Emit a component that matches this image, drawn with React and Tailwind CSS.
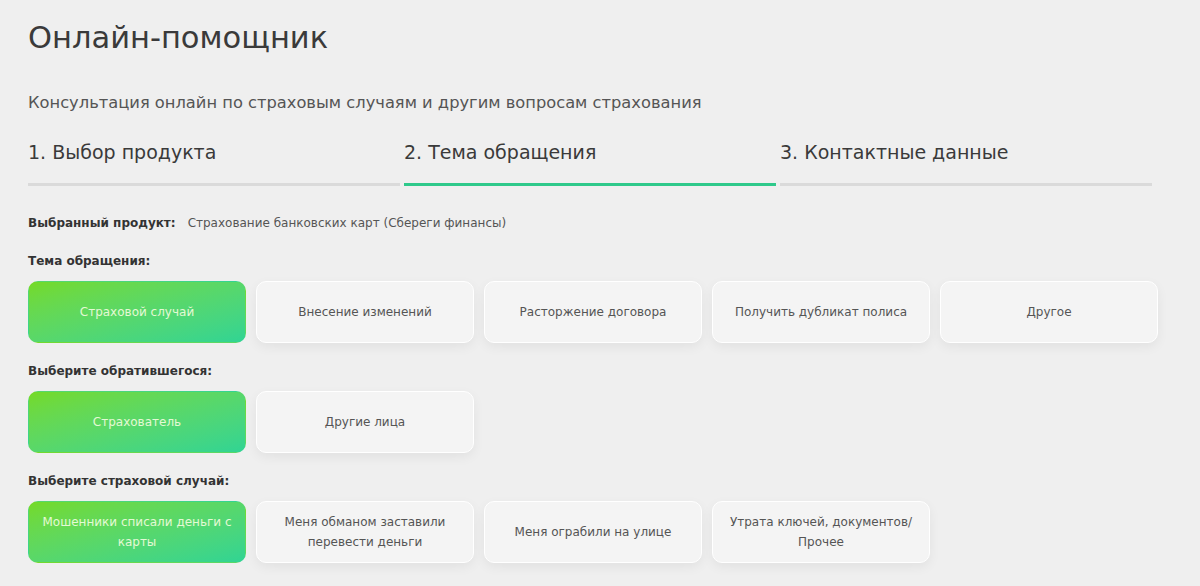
import { useState } from "react";

const STEPS = ["1. Выбор продукта", "2. Тема обращения", "3. Контактные данные"];

const TOPICS = [
    "Страховой случай",
    "Внесение изменений",
    "Расторжение договора",
    "Получить дубликат полиса",
    "Другое"
];

const APPLICANTS = ["Страхователь", "Другие лица"];

const CASES = [
    "Мошенники списали деньги с карты",
    "Меня обманом заставили перевести деньги",
    "Меня ограбили на улице",
    "Утрата ключей, документов/ Прочее"
];

// Option tile; the selected one gets the green gradient
const Option = ({ label, active, onClick }) => (
    <button
        onClick={onClick}
        className={`w-[218px] h-[62px] px-[12px] rounded-[10px] text-[12px] leading-[20px] text-center flex items-center justify-center ${
            active
                ? "bg-gradient-to-br from-[#74da24] to-[#30d493] text-[#e4f9d4] border border-transparent"
                : "bg-[#f4f4f4] text-[#555] border border-white shadow-[0_4px_12px_rgba(0,0,0,0.06)]"
        }`}
    >
        {label}
    </button>
);

const Group = ({ title, items, value, onChange }) => (
    <div>
        <div className="text-[12px] font-bold text-[#333] leading-[20px]">{title}</div>
        <div className="flex gap-[10px] mt-[10px]">
            {items.map((it, i) => (
                <Option key={it} label={it} active={value === i} onClick={() => onChange(i)} />
            ))}
        </div>
    </div>
);

export default function App() {
    const [topic, setTopic] = useState(0);
    const [applicant, setApplicant] = useState(0);
    const [kase, setKase] = useState(0);

    return (
        <div className="min-h-[586px] bg-[#efefef] px-[28px] pt-[18px] font-['DejaVu_Sans',sans-serif] text-[#333]">
            <h1 className="text-[30.5px] leading-[40px] font-normal text-[#3a3a3a]">Онлайн-помощник</h1>

            <p className="mt-[33px] text-[16.3px] leading-[24px] text-[#555]">
                Консультация онлайн по страховым случаям и другим вопросам страхования
            </p>

            {/* Steps */}
            <div className="flex gap-[4px] mt-[24px] w-[1124px]">
                {STEPS.map((s, i) => (
                    <div key={s} className="flex-1">
                        <div className="text-[19px] leading-[26px] text-[#3a3a3a]">{s}</div>
                        <div
                            className={`mt-[18px] h-[3px] ${i === 1 ? "bg-[#2fc98b]" : "bg-[#dadada]"}`}
                        />
                    </div>
                ))}
            </div>

            <div className="mt-[27px] flex items-center text-[12px] leading-[20px]">
                <span className="font-bold text-[#333]">Выбранный продукт:</span>
                <span className="ml-[12px] text-[#555]">Страхование банковских карт (Сбереги финансы)</span>
            </div>

            <div className="mt-[18px] flex flex-col gap-[18px]">
                <Group title="Тема обращения:" items={TOPICS} value={topic} onChange={setTopic} />
                <Group title="Выберите обратившегося:" items={APPLICANTS} value={applicant} onChange={setApplicant} />
                <Group title="Выберите страховой случай:" items={CASES} value={kase} onChange={setKase} />
            </div>
        </div>
    );
}
